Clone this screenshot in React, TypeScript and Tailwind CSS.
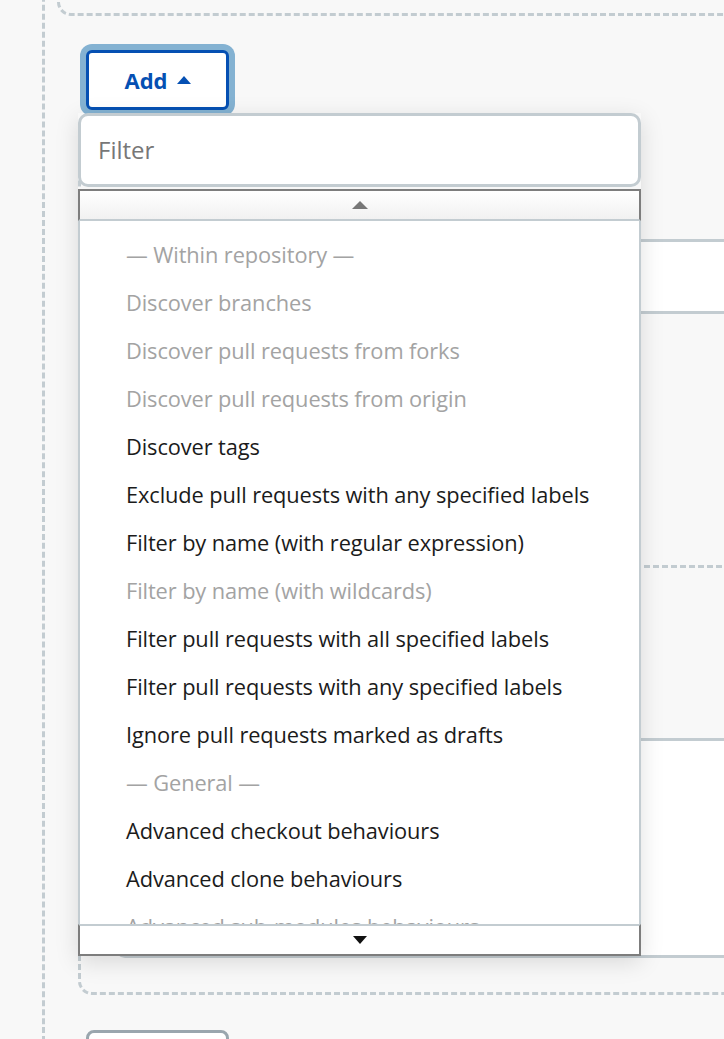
import React from "react";

const items: { label: string; kind: "head" | "off" | "on" }[] = [
  { label: "— Within repository —", kind: "head" },
  { label: "Discover branches", kind: "off" },
  { label: "Discover pull requests from forks", kind: "off" },
  { label: "Discover pull requests from origin", kind: "off" },
  { label: "Discover tags", kind: "on" },
  { label: "Exclude pull requests with any specified labels", kind: "on" },
  { label: "Filter by name (with regular expression)", kind: "on" },
  { label: "Filter by name (with wildcards)", kind: "off" },
  { label: "Filter pull requests with all specified labels", kind: "on" },
  { label: "Filter pull requests with any specified labels", kind: "on" },
  { label: "Ignore pull requests marked as drafts", kind: "on" },
  { label: "— General —", kind: "head" },
  { label: "Advanced checkout behaviours", kind: "on" },
  { label: "Advanced clone behaviours", kind: "on" },
  { label: "Advanced sub-modules behaviours", kind: "off" },
  { label: "Calculate changelog against a specific branch", kind: "on" },
];

const font = { fontFamily: '"Open Sans", "Noto Sans", "Liberation Sans", sans-serif' };

function Dropdown() {
  return (
    <div className="absolute left-[-8px] top-[63px] w-[563px] shadow-[0_6px_22px_rgba(0,0,0,0.13)]">
      {/* filter box */}
      <div className="h-[74px] bg-white border-[3px] border-[#c3ccd1] rounded-[10px] flex items-center pl-[17px] text-[24px] text-[#777]">
        Filter
      </div>
      {/* scroll up */}
      <div className="mt-[2px] h-[32px] border-t-2 border-x-2 border-b-2 border-t-[#7d7d7d] border-x-[#7d7d7d] border-b-[#c3ccd1] bg-gradient-to-b from-white to-[#f1f1f1] flex items-center justify-center">
        <svg width="16" height="8" viewBox="0 0 16 8"><path d="M8 0 L16 8 L0 8 Z" fill="#777" /></svg>
      </div>
      {/* list */}
      <div className="h-[703px] overflow-hidden bg-white border-x-2 border-[#c3ccd1] pt-[10px]">
        {items.map((it) => (
          <div
            key={it.label}
            className={
              "h-[48px] flex items-center pl-[46px] whitespace-nowrap text-[21.8px] tracking-[-0.1px] " +
              (it.kind === "on" ? "text-[#1b1b1b]" : "text-[#a3a3a3]")
            }
          >
            {it.label}
          </div>
        ))}
      </div>
      {/* scroll down */}
      <div className="h-[32px] border-t-2 border-x-2 border-b-2 border-t-[#c3ccd1] border-x-[#7d7d7d] border-b-[#7d7d7d] bg-white flex items-center justify-center">
        <svg width="14" height="8" viewBox="0 0 14 8"><path d="M0 0 L14 0 L7 8 Z" fill="#111" /></svg>
      </div>
    </div>
  );
}

export default function App() {
  return (
    <div className="relative h-[1039px] overflow-hidden bg-[#f8f8f8]" style={font}>
      <div className="ml-[42px] h-[1100px] border-l-[3px] border-dashed border-[#c3ccd1]">
        {/* previous section's dashed box */}
        <div className="ml-[12px] mr-[-40px] mt-[-40px] h-[56px] border-[3px] border-dashed border-[#c3ccd1] rounded-[14px]" />

        {/* Add button with open menu */}
        <div className="relative z-10 ml-[41px] mt-[34px] w-[143px]">
          <button className="h-[60px] w-[143px] bg-white border-[3px] border-[#0550b3] rounded-[6px] shadow-[0_0_0_6px_#84b2d2] flex items-center justify-center gap-[9px] text-[22px] font-bold text-[#0550b3]">
            Add
            <svg width="14" height="8" viewBox="0 0 14 8"><path d="M7 0 L14 8 L0 8 Z" fill="#0550b3" /></svg>
          </button>
          <Dropdown />
        </div>

        {/* section behind the menu */}
        <div className="ml-[33px] mr-[-40px] mt-[40px] border-[3px] border-t-0 border-dashed border-[#c3ccd1] rounded-b-[14px] pl-[34px] pt-[89px] pb-[34px]">
          <div className="border-[3px] border-[#c3ccd1] rounded-[10px] overflow-hidden">
            <div className="h-[72px] bg-white border-b-[3px] border-[#c3ccd1]" />
            <div className="h-[424px] bg-[#f8f8f8] pt-[251px]">
              <div className="ml-[40px] border-t-[3px] border-dashed border-[#c3ccd1]" />
            </div>
            <div className="h-[217px] bg-white border-t-[3px] border-[#c3ccd1]" />
          </div>
        </div>

        {/* next button */}
        <div className="ml-[41px] mt-[35px] h-[60px] w-[143px] border-[3px] border-[#9aa6ae] rounded-[8px] bg-white" />
      </div>
    </div>
  );
}
